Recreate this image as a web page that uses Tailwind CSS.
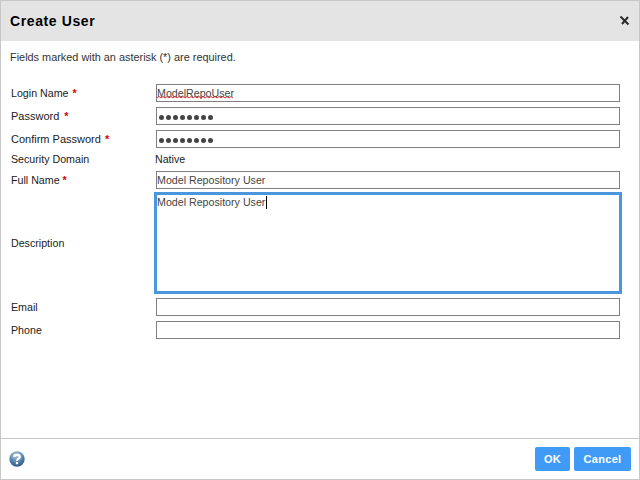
<!DOCTYPE html>
<html>
<head>
<meta charset="utf-8">
<script src="https://cdn.jsdelivr.net/npm/@tailwindcss/browser@4"></script>
</head>
<body class="m-0 bg-white">
<div class="w-[640px] h-[480px] flex flex-col border border-[#c8c8c8] bg-white font-['Liberation_Sans',sans-serif] text-[10.67px] text-[#222] overflow-hidden">
  <header class="h-[40px] shrink-0 bg-[#e4e4e4] flex items-center justify-between pl-[9px] pr-[9px]">
    <h1 class="text-[14px] font-bold text-black tracking-[0.6px]">Create User</h1>
    <svg width="10" height="10" viewBox="0 0 10 10" class="block"><path d="M0.5 0.5 L8.5 8.5 M8 1 L2 8" stroke="#2a2a2a" stroke-width="2" fill="none"/></svg>
  </header>
  <p class="h-[34px] flex items-center pl-[9px] pb-[2px] text-[10.9px] text-[#333] shrink-0">Fields marked with an asterisk (*) are required.</p>
  <div class="flex flex-col pl-[10px] pr-[19px] pt-[9px] flex-1">
    <div class="flex items-center h-[18px]">
      <label class="w-[145px] shrink-0">Login Name <span class="text-[#d00] font-bold ml-[1px]">*</span></label>
      <div class="flex-1 h-[18px] border border-[#808080] flex items-center text-[#444]">
        <span class="relative">ModelRepoUser<svg width="76" height="3" viewBox="0 0 76 3" class="absolute left-0 top-[11px] block"><path d="M0 2 L2 0.5 L4 2 L6 0.5 L8 2 L10 0.5 L12 2 L14 0.5 L16 2 L18 0.5 L20 2 L22 0.5 L24 2 L26 0.5 L28 2 L30 0.5 L32 2 L34 0.5 L36 2 L38 0.5 L40 2 L42 0.5 L44 2 L46 0.5 L48 2 L50 0.5 L52 2 L54 0.5 L56 2 L58 0.5 L60 2 L62 0.5 L64 2 L66 0.5 L68 2 L70 0.5 L72 2 L74 0.5 L76 2" stroke="#d33" stroke-width="1" fill="none"/></svg></span>
      </div>
    </div>
    <div class="flex items-center h-[18px] mt-[5px]">
      <label class="w-[145px] shrink-0 text-[11px]">Password <span class="text-[#d00] font-bold ml-[2px]">*</span></label>
      <div class="flex-1 h-[18px] border border-[#808080] flex items-center gap-[2px] pl-[2px] pt-[2px]">
        <span class="w-[5px] h-[5px] rounded-full bg-[#444]"></span><span class="w-[5px] h-[5px] rounded-full bg-[#444]"></span><span class="w-[5px] h-[5px] rounded-full bg-[#444]"></span><span class="w-[5px] h-[5px] rounded-full bg-[#444]"></span><span class="w-[5px] h-[5px] rounded-full bg-[#444]"></span><span class="w-[5px] h-[5px] rounded-full bg-[#444]"></span><span class="w-[5px] h-[5px] rounded-full bg-[#444]"></span><span class="w-[5px] h-[5px] rounded-full bg-[#444]"></span>
      </div>
    </div>
    <div class="flex items-center h-[18px] mt-[5px]">
      <label class="w-[145px] shrink-0 text-[11px]">Confirm Password <span class="text-[#d00] font-bold ml-[1px]">*</span></label>
      <div class="flex-1 h-[18px] border border-[#808080] flex items-center gap-[2px] pl-[2px] pt-[2px]">
        <span class="w-[5px] h-[5px] rounded-full bg-[#444]"></span><span class="w-[5px] h-[5px] rounded-full bg-[#444]"></span><span class="w-[5px] h-[5px] rounded-full bg-[#444]"></span><span class="w-[5px] h-[5px] rounded-full bg-[#444]"></span><span class="w-[5px] h-[5px] rounded-full bg-[#444]"></span><span class="w-[5px] h-[5px] rounded-full bg-[#444]"></span><span class="w-[5px] h-[5px] rounded-full bg-[#444]"></span><span class="w-[5px] h-[5px] rounded-full bg-[#444]"></span>
      </div>
    </div>
    <div class="flex items-center h-[18px] mt-[2px]">
      <label class="w-[145px] shrink-0">Security Domain</label>
      <span class="ml-[-1px]">Native</span>
    </div>
    <div class="flex items-center h-[18px] mt-[3px]">
      <label class="w-[145px] shrink-0">Full Name <span class="text-[#d00] font-bold">*</span></label>
      <div class="flex-1 h-[18px] border border-[#808080] flex items-center text-[#444]">Model Repository User</div>
    </div>
    <div class="flex items-center h-[102px] mt-[3px]">
      <label class="w-[145px] shrink-0">Description</label>
      <div class="flex-1 h-[102px] mx-[-2px] border-[3px] border-[#4a97e0] text-[#444] leading-[13px] pt-[1px]">Model Repository User<span class="inline-block w-[1px] h-[13px] bg-black align-top ml-[1px]"></span></div>
    </div>
    <div class="flex items-center h-[18px] mt-[4px]">
      <label class="w-[145px] shrink-0">Email</label>
      <div class="flex-1 h-[18px] border border-[#808080]"></div>
    </div>
    <div class="flex items-center h-[18px] mt-[5px]">
      <label class="w-[145px] shrink-0">Phone</label>
      <div class="flex-1 h-[18px] border border-[#808080]"></div>
    </div>
  </div>
  <footer class="h-[41px] shrink-0 border-t border-[#c8c8c8] flex items-center justify-between pl-[8px] pr-[8px]">
    <svg width="16" height="16" viewBox="0 0 16 16" class="block">
      <defs><radialGradient id="g" cx="45%" cy="25%" r="80%"><stop offset="0%" stop-color="#b5cde2"/><stop offset="55%" stop-color="#5a86b0"/><stop offset="100%" stop-color="#274f7c"/></radialGradient></defs>
      <circle cx="8" cy="8" r="7.7" fill="url(#g)"/>
      <path d="M5.2 6 C5.2 3.2 10.8 3.2 10.8 6 C10.8 7.8 8 7.6 8 9.8" stroke="#fff" stroke-width="2.2" fill="none"/>
      <rect x="6.9" y="11" width="2.2" height="2.2" fill="#fff"/>
    </svg>
    <div class="flex gap-[4px]">
      <button class="w-[35px] h-[24px] rounded-[2px] bg-[#3f9bf6] text-white font-bold text-[11px] tracking-[0.3px]">OK</button>
      <button class="w-[57px] h-[24px] rounded-[2px] bg-[#3f9bf6] text-white font-bold text-[11px] tracking-[0.3px]">Cancel</button>
    </div>
  </footer>
</div>
</body>
</html>
